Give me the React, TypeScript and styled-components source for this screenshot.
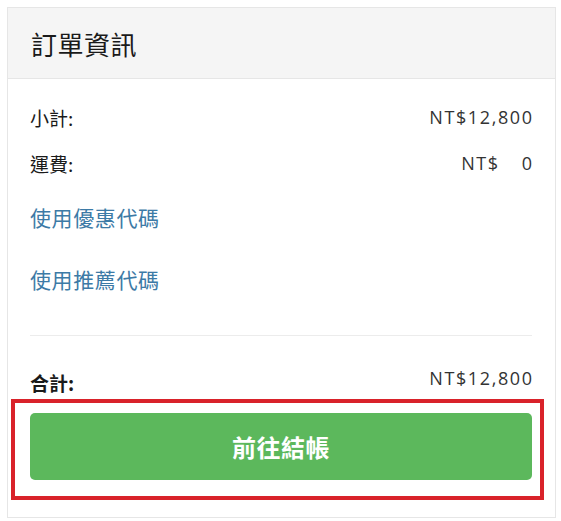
import React from 'react';
import styled, { createGlobalStyle } from 'styled-components';

const GlobalStyle = createGlobalStyle`
    html, body {
        margin: 0;
        padding: 0;
        background: #ffffff;
    }
    body {
        font-family: "Open Sans", "Noto Sans CJK TC", sans-serif;
        color: #222222;
    }
`;

const Page = styled.div`
    padding: 7px 0 0 7px;
`;

const Card = styled.div`
    width: 547px;
    border: 1px solid #e6e6e6;
    background: #ffffff;
    padding-bottom: 37px;
`;

const CardHeader = styled.div`
    height: 70px;
    display: flex;
    align-items: center;
    padding-left: 23px;
    background: #f5f5f5;
    border-bottom: 1px solid #e6e6e6;
    font-family: "Noto Sans CJK TC", sans-serif;
    font-size: 26px;
    letter-spacing: 0.5px;
    color: #1a1a1a;
`;

const CardBody = styled.div`
    padding: 15px 23px 0 22px;
`;

const Row = styled.div<{ height: number }>`
    display: flex;
    justify-content: space-between;
    align-items: center;
    height: ${(p) => p.height}px;
`;

const Label = styled.span<{ bold?: boolean }>`
    font-family: "Noto Sans CJK TC", sans-serif;
    font-size: 19px;
    font-weight: ${(p) => (p.bold ? 700 : 400)};
    color: #1a1a1a;
`;

const Amount = styled.span<{ raise?: number }>`
    font-family: "Open Sans", sans-serif;
    font-size: 18px;
    letter-spacing: 1.6px;
    margin-right: -1.6px;
    color: #333333;
    display: flex;
    margin-bottom: ${(p) => p.raise ?? 0}px;
`;

const AmountGap = styled.span`
    display: inline-block;
    width: 22px;
`;

const LinkRow = styled.div`
    height: 62px;
    display: flex;
    align-items: center;
`;

const CodeLink = styled.a`
    font-family: "Noto Sans CJK TC", sans-serif;
    font-size: 21px;
    letter-spacing: 0.6px;
    color: #3c7aa6;
    text-decoration: none;
    cursor: pointer;
`;

const Divider = styled.hr`
    border: none;
    border-top: 1px solid #ececec;
    margin: 25px 0 0;
`;

const TotalRow = styled(Row)`
    margin-top: 26px;
`;

const ButtonWrap = styled.div`
    position: relative;
    margin-top: 11px;
`;

const Highlight = styled.div`
    position: absolute;
    top: -14px;
    left: -19px;
    right: -12px;
    bottom: -20px;
    border: 4px solid #d9222a;
    pointer-events: none;
`;

const CheckoutButton = styled.button`
    display: block;
    width: 100%;
    height: 67px;
    border: none;
    border-radius: 5px;
    background: #5cb85c;
    color: #ffffff;
    font-family: "Noto Sans CJK TC", sans-serif;
    font-size: 24px;
    font-weight: 700;
    letter-spacing: 0.5px;
    cursor: pointer;
`;

const App: React.FC = () => {
    return (
        <Page>
            <GlobalStyle />
            <Card>
                <CardHeader>訂單資訊</CardHeader>
                <CardBody>
                    <Row height={46}>
                        <Label>小計:</Label>
                        <Amount>NT$12,800</Amount>
                    </Row>
                    <Row height={46}>
                        <Label>運費:</Label>
                        <Amount>
                            NT$<AmountGap />0
                        </Amount>
                    </Row>
                    <LinkRow>
                        <CodeLink>使用優惠代碼</CodeLink>
                    </LinkRow>
                    <LinkRow>
                        <CodeLink>使用推薦代碼</CodeLink>
                    </LinkRow>
                    <Divider />
                    <TotalRow height={40}>
                        <Label bold>合計:</Label>
                        <Amount raise={9}>NT$12,800</Amount>
                    </TotalRow>
                    <ButtonWrap>
                        <CheckoutButton>前往結帳</CheckoutButton>
                        <Highlight />
                    </ButtonWrap>
                </CardBody>
            </Card>
        </Page>
    );
};

export default App;
